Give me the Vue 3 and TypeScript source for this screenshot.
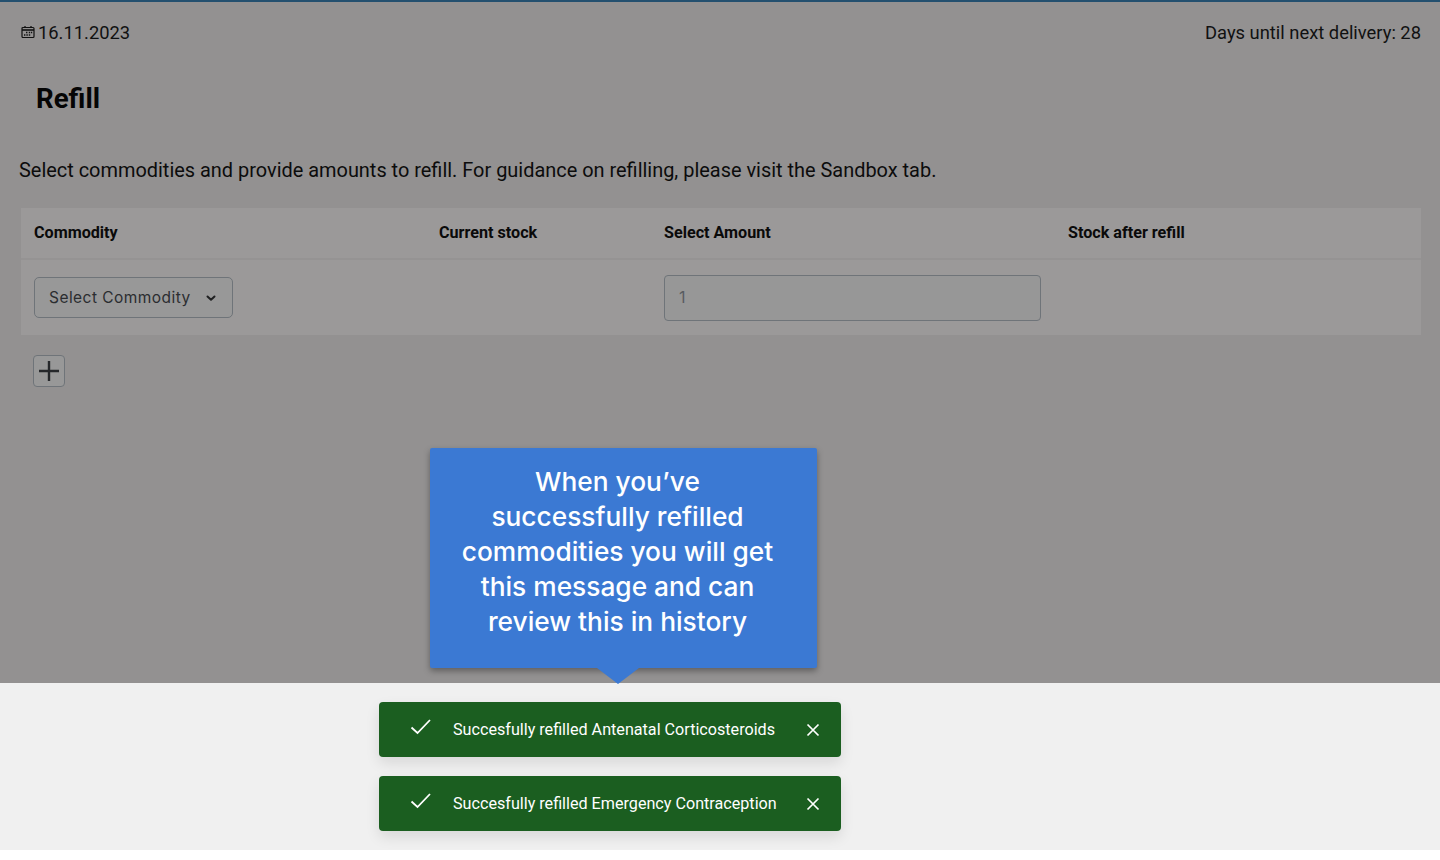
<script setup lang="ts">
const headers: string[] = ['Commodity', 'Current stock', 'Select Amount', 'Stock after refill']
const toasts: string[] = [
  'Succesfully refilled Antenatal Corticosteroids',
  'Succesfully refilled Emergency Contraception',
]
</script>

<template>
  <div class="page">
    <main class="dimmed">
      <header class="topbar">
        <div class="date">
          <svg class="cal" width="14" height="14" viewBox="0 0 14 14" fill="none" stroke="#111">
            <rect x="1" y="2.5" width="12" height="10" rx="1" stroke-width="1.2" />
            <path d="M1 5h12" stroke-width="1.6" />
            <path d="M4 1v2M10 1v2" stroke-width="1.3" />
            <path d="M5 7.5h1.4M7.8 7.5h1.4M10 7.5h1.2M3 10h1.4M5.4 10h1.4M7.8 10h1.4" stroke-width="1.3" />
          </svg>
          <span>16.11.2023</span>
        </div>
        <div>Days until next delivery: 28</div>
      </header>
      <h1>Refill</h1>
      <p class="intro">Select commodities and provide amounts to refill. For guidance on refilling, please visit the Sandbox tab.</p>
      <section class="table">
        <div class="row head">
          <div v-for="h in headers" :key="h" class="cell">{{ h }}</div>
        </div>
        <div class="row body">
          <div class="cell">
            <div class="select">
              <span>Select Commodity</span>
              <svg width="12" height="12" viewBox="0 0 12 12" fill="none" stroke="#1f2021" stroke-width="2" stroke-linecap="round" stroke-linejoin="round">
                <path d="M2.5 4.5 6 7.8l3.5-3.3" />
              </svg>
            </div>
          </div>
          <div class="cell"></div>
          <div class="cell"><div class="amount">1</div></div>
          <div class="cell"></div>
        </div>
      </section>
      <div class="add">
        <svg width="24" height="24" viewBox="0 0 24 24" fill="none" stroke="#26282b" stroke-width="2.4">
          <path d="M12 2v20M2 12h20" />
        </svg>
      </div>
    </main>

    <div class="tip">
      <div class="tip-text">When you’ve successfully refilled commodities you will get this message and can review this in history</div>
    </div>

    <div class="toasts">
      <div v-for="t in toasts" :key="t" class="toast">
        <svg class="check" width="22" height="18" viewBox="0 0 22 18" fill="none" stroke="#fff" stroke-width="1.8">
          <path d="M1.5 9.5 7.5 15 20 2" />
        </svg>
        <span class="msg">{{ t }}</span>
        <svg class="close" width="14" height="14" viewBox="0 0 14 14" fill="none" stroke="#fff" stroke-width="1.7">
          <path d="M1.5 1.5l11 11M12.5 1.5l-11 11" />
        </svg>
      </div>
    </div>
  </div>
</template>

<style>
html, body { margin: 0; background: #fff; }
</style>

<style scoped>
.page {
  position: relative;
  height: 850px;
  background: #f0f0f0;
  font-family: Roboto, "Liberation Sans", sans-serif;
  color: #0a0a0a;
  overflow: hidden;
}
.dimmed {
  height: 683px;
  box-sizing: border-box;
  background: #939191;
  border-top: 2px solid #24506f;
  padding: 0 19px;
}
.topbar {
  display: flex;
  justify-content: space-between;
  align-items: center;
  height: 60px;
  font-size: 18.35px;
  color: #111;
}
.date { display: flex; align-items: center; gap: 3px; padding-left: 2px; }
h1 {
  margin: 0;
  padding: 20px 0 0 17px;
  font-size: 27.6px;
  line-height: 34px;
  font-weight: 700;
  color: #050505;
}
.intro {
  margin: 43px 0 0;
  font-size: 19.93px;
  line-height: 24px;
  color: #0c0c0c;
}
.table { margin: 25px 0 0 2px; background: #9b9999; }
.row {
  display: grid;
  grid-template-columns: 405px 225px 404px 1fr;
}
.head {
  height: 52px;
  align-items: center;
  background: #9b9999;
  border-bottom: 2px solid #959393;
  box-sizing: border-box;
  padding-bottom: 2px;
  font-size: 16.15px;
  font-weight: 700;
  color: #0a0a0a;
}
.body { height: 75px; align-items: center; }
.cell { padding-left: 13px; padding-right: 13px; min-width: 0; }
.select {
  width: 199px;
  height: 41px;
  box-sizing: border-box;
  border: 1.5px solid #6f7479;
  border-radius: 5px;
  background: #989898;
  display: flex;
  align-items: center;
  justify-content: space-between;
  padding: 0 15px 0 14px;
  font-family: Inter, sans-serif;
  font-size: 15.5px;
  letter-spacing: .45px;
  color: #2b2d30;
}
.amount {
  width: 377px;
  height: 46px;
  box-sizing: border-box;
  border: 1.5px solid #6f7479;
  border-radius: 4px;
  background: #979797;
  display: flex;
  align-items: center;
  padding: 0 0 2px 14px;
  font-family: Inter, sans-serif;
  font-size: 16px;
  color: #585c61;
}
.add {
  margin: 20px 0 0 14px;
  width: 32px;
  height: 32px;
  box-sizing: border-box;
  border: 1.5px solid #6f7479;
  border-radius: 4px;
  background: #989898;
  display: flex;
  align-items: center;
  justify-content: center;
}
.tip {
  position: absolute;
  left: 430px;
  top: 448px;
  width: 387px;
  height: 220px;
  box-sizing: border-box;
  padding: 16px 40px 0 28px;
  background: #3b79d3;
  border-radius: 2px;
  box-shadow: 0 3px 6px rgba(0, 0, 0, .35);
  color: #fff;
  font-family: Inter, sans-serif;
  font-size: 26.3px;
  font-weight: 500;
  line-height: 35px;
  text-align: center;
}
.tip-text { width: 319px; }
.tip::after {
  content: "";
  position: absolute;
  left: 167px;
  bottom: -16px;
  border-left: 21px solid transparent;
  border-right: 21px solid transparent;
  border-top: 16px solid #3b79d3;
}
.toasts {
  position: absolute;
  left: 379px;
  top: 702px;
  display: flex;
  flex-direction: column;
  gap: 19px;
}
.toast {
  width: 462px;
  height: 55px;
  box-sizing: border-box;
  background: #1b5e20;
  border-radius: 4px;
  box-shadow: 0 6px 14px rgba(0, 0, 0, .1);
  color: #fff;
  font-size: 16.15px;
  position: relative;
}
.check { position: absolute; left: 31px; top: 16px; }
.msg { position: absolute; left: 74px; top: 18px; line-height: 20px; white-space: nowrap; }
.close { position: absolute; left: 427px; top: 21px; }
</style>
